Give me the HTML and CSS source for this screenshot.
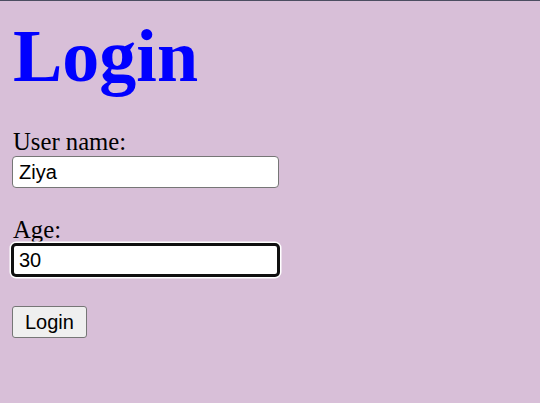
FILE: index.html
```html
<!DOCTYPE html>
<html lang="en">
<head>
<meta charset="utf-8">
<title>Login</title>
<link rel="stylesheet" href="styles.css">
</head>
<body>
<h1 class="title">Login</h1>
<form class="login-form">
  <label class="field-label" for="user">User name:</label>
  <input class="field-input" id="user" type="text" value="Ziya">
  <label class="field-label" for="age">Age:</label>
  <input class="field-input field-focused" id="age" type="text" value="30">
  <button class="submit-btn" type="button">Login</button>
</form>
</body>
</html>
```
FILE: styles.css
```css
html {
  background: #d8bfd8;
}
body {
  margin: 0;
  border-top: 1px solid #4b4e61;
  padding: 0 12px;
  background: #d8bfd8;
  font-family: "Liberation Serif", "Times New Roman", serif;
  font-size: 24.7px;
  color: #000;
  min-height: 402px;
  box-sizing: border-box;
}
.title {
  margin: 13px 0 0 1px;
  font-family: "Liberation Serif", "Times New Roman", serif;
  font-weight: bold;
  font-size: 74px;
  line-height: 84px;
  color: #0000ff;
}
.login-form {
  display: flex;
  flex-direction: column;
  align-items: flex-start;
  margin-top: 30px;
}
.field-label {
  font-size: 24.7px;
  line-height: 28px;
  height: 28px;
  padding-left: 1px;
}
.field-input {
  box-sizing: border-box;
  width: 267px;
  height: 32px;
  margin: 0 0 28px;
  padding: 0 6px;
  border: 1px solid #767676;
  border-radius: 4px;
  background: #fff;
  font-family: "Liberation Sans", Arial, sans-serif;
  font-size: 20px;
  color: #000;
  outline: none;
}
.field-focused {
  border: 2px solid #101010;
  padding: 0 5px;
  box-shadow: 0 0 0 1px #101010, 0 0 0 2.5px #fff;
  margin-bottom: 30px;
}
.submit-btn {
  box-sizing: border-box;
  height: 32px;
  padding: 0 12px;
  border: 1px solid #767676;
  border-radius: 3px;
  background: #efefef;
  font-family: "Liberation Sans", Arial, sans-serif;
  font-size: 20px;
  color: #000;
}
```
